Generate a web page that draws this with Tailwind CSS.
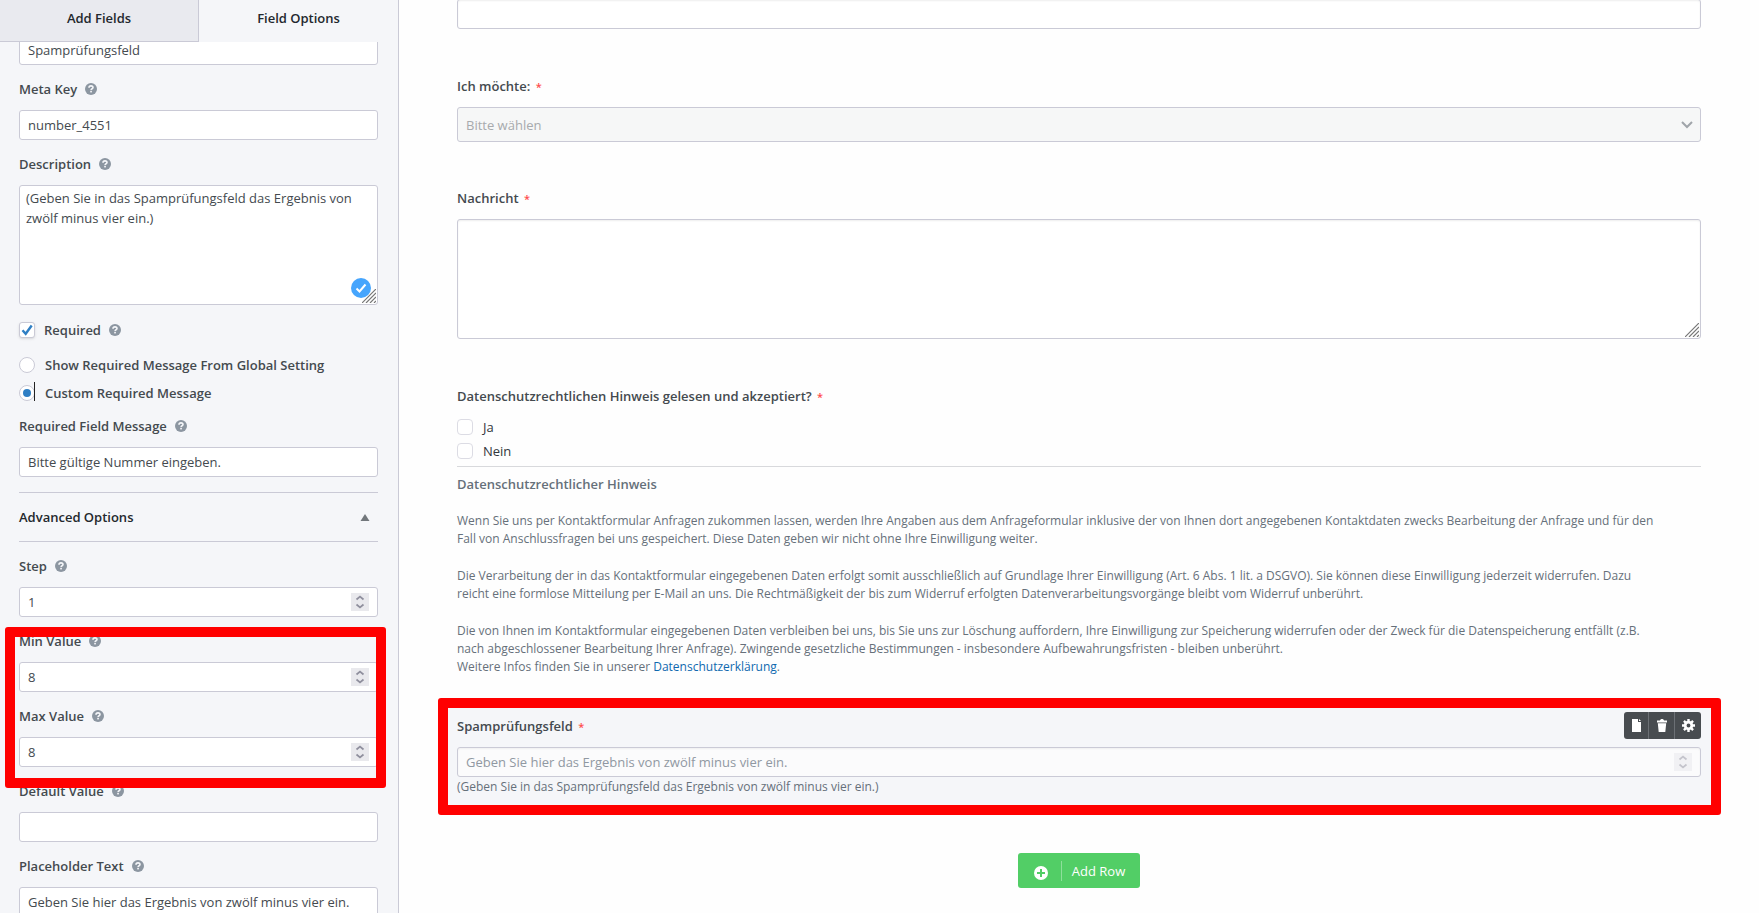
<!DOCTYPE html>
<html lang="de">
<head>
    <meta charset="UTF-8">
    <meta name="viewport" content="width=device-width, initial-scale=1.0">
    <title>Form Builder</title>
    <!-- Tailwind CSS CDN -->
    <script src="https://cdn.jsdelivr.net/npm/@tailwindcss/browser@4"></script>
</head>
<body class="h-screen overflow-hidden flex bg-[#fefefe] font-['Segoe_UI','Open_Sans',sans-serif] text-[13px] leading-5 text-[#444a4f]">

    <!-- Shared icons -->
    <svg class="hidden">
        <symbol id="help" viewBox="0 0 12 12">
            <circle cx="6" cy="6" r="6" fill="#8c96a1"/>
            <path d="M4 4.700C4 3.500 4.900 2.900 6 2.900s2 .7 2 1.700c0 1.300-1.900 1.100-1.900 2.500" fill="none" stroke="#f5f6f9" stroke-width="1.600"/>
            <rect x="5.200" y="7.800" width="1.700" height="1.600" fill="#f5f6f9"/>
        </symbol>
        <symbol id="spin" viewBox="0 0 18 18">
            <rect width="18" height="18" fill="#e9e9ed"/>
            <path d="M5.500 6.500L9 3.500l3.500 3M5.500 11.500l3.500 3 3.500-3" fill="none" stroke="#8f8f9d" stroke-width="1.700"/>
        </symbol>
        <symbol id="grip" viewBox="0 0 14 14">
            <path d="M0 14L14 0M4 14L14 4M8 14l6-6M12 14l2-2" fill="none" stroke="#777" stroke-width="1.200"/>
        </symbol>
    </svg>

    <!-- Sidebar -->
    <aside class="w-[399px] shrink-0 flex flex-col bg-[#f5f6f9] border-r border-[#cacad6]">
        <div class="grid grid-cols-2 shrink-0 h-[42px] text-[#23282d] font-[550]">
            <button class="bg-[#e9eaef] border-r border-b border-[#cacad6] pb-1.5">Add Fields</button>
            <button class="pb-1.5">Field Options</button>
        </div>

        <div class="flex-1 overflow-hidden pl-[19px] pr-5">
            <div class="-mt-[7px] flex flex-col gap-3.5">
                <input type="text" aria-label="Field Label" value="Spamprüfungsfeld" class="w-full h-[30px] px-2 bg-white border border-[#cacad6] rounded-[3px]">

                <div class="flex flex-col gap-[11px]">
                    <label for="metaKey" class="flex items-center gap-2 font-[550]">Meta Key <svg class="size-3"><use href="#help"/></svg></label>
                    <input type="text" id="metaKey" value="number_4551" class="w-full h-[30px] px-2 bg-white border border-[#cacad6] rounded-[3px]">
                </div>

                <div class="flex flex-col gap-[11px]">
                    <label for="description" class="flex items-center gap-2 font-[550]">Description <svg class="size-3"><use href="#help"/></svg></label>
                    <div class="relative h-[120px]">
                        <textarea id="description" class="block w-full h-full px-1.5 py-0.5 resize-none bg-white border border-[#cacad6] rounded-[3px] leading-5">(Geben Sie in das Spamprüfungsfeld das Ergebnis von zwölf minus vier ein.)</textarea>
                        <svg class="absolute right-[7px] bottom-[7px] size-5" viewBox="0 0 20 20">
                            <circle cx="10" cy="10" r="10" fill="#46a5fd"/>
                            <path d="M5.500 10.500l3 3 6-7" fill="none" stroke="#fff" stroke-width="2"/>
                        </svg>
                        <svg class="absolute right-0.5 bottom-0.5 size-3.5"><use href="#grip"/></svg>
                    </div>
                </div>

                <div class="pt-0.5 leading-[18px]">
                    <div class="flex items-center h-[18px] font-[550]">
                        <span class="relative size-4 mr-[9px]">
                            <input type="checkbox" id="required" checked class="block size-4 appearance-none bg-white border border-[#cacad6] rounded-[3px] shadow-sm">
                            <svg class="absolute inset-0 size-4 pointer-events-none" viewBox="0 0 16 16"><path d="M3.500 8.200l3.200 3.600 6-8.300" fill="none" stroke="#2f7fc4" stroke-width="2.400"/></svg>
                        </span>
                        <label for="required" class="mr-2">Required</label>
                        <svg class="size-3"><use href="#help"/></svg>
                    </div>
                    <label class="mt-[17px] flex items-center gap-2.5 font-[550]">
                        <input type="radio" name="message" class="size-4 appearance-none bg-white border border-[#cacad6] rounded-full">
                        Show Required Message From Global Setting
                    </label>
                    <label class="relative mt-2.5 flex items-center gap-2.5 font-[550]">
                        <span class="flex items-center justify-center relative">
                            <input type="radio" name="message" checked class="size-4 appearance-none bg-white border border-[#cacad6] rounded-full">
                            <span class="absolute size-2 rounded-full bg-[#2f7fc4]"></span>
                        </span>
                        Custom Required Message
                        <!-- text caret next to the radio -->
                        <span class="absolute left-[15px] bottom-px w-px h-[19px] bg-[#222]"></span>
                    </label>
                </div>

                <div class="flex flex-col gap-[11px]">
                    <label for="requiredMessage" class="flex items-center gap-2 font-[550]">Required Field Message <svg class="size-3"><use href="#help"/></svg></label>
                    <input type="text" id="requiredMessage" value="Bitte gültige Nummer eingeben." class="w-full h-[30px] px-2 bg-white border border-[#cacad6] rounded-[3px]">
                </div>

                <button class="mt-px flex items-center justify-between h-[50px] pr-2 border-y border-[#cacad6] text-[#23282d] font-semibold">
                    Advanced Options
                    <svg class="w-2.5 h-[7px]" viewBox="0 0 10 7"><path d="M5 0l4.500 7h-9z" fill="#72777c"/></svg>
                </button>

                <div class="flex flex-col gap-[11px]">
                    <label for="step" class="flex items-center gap-2 font-[550]">Step <svg class="size-3"><use href="#help"/></svg></label>
                    <div class="relative">
                        <input type="number" id="step" value="1" class="block w-full h-[30px] px-2 bg-white border border-[#cacad6] rounded-[3px] [appearance:textfield]">
                        <svg class="absolute right-[9px] top-1.5 size-[18px]"><use href="#spin"/></svg>
                    </div>
                </div>

                <!-- Min / Max, marked in red -->
                <div class="relative flex flex-col gap-3.5">
                    <div class="flex flex-col gap-[11px]">
                        <label for="minValue" class="flex items-center gap-2 font-[550]">Min Value <svg class="size-3"><use href="#help"/></svg></label>
                        <div class="relative">
                            <input type="number" id="minValue" value="8" class="block w-full h-[30px] px-2 bg-white border border-[#cacad6] rounded-[3px] [appearance:textfield]">
                            <svg class="absolute right-[9px] top-1.5 size-[18px]"><use href="#spin"/></svg>
                        </div>
                    </div>
                    <div class="flex flex-col gap-[11px]">
                        <label for="maxValue" class="flex items-center gap-2 font-[550]">Max Value <svg class="size-3"><use href="#help"/></svg></label>
                        <div class="relative">
                            <input type="number" id="maxValue" value="8" class="block w-full h-[30px] px-2 bg-white border border-[#cacad6] rounded-[3px] [appearance:textfield]">
                            <svg class="absolute right-[9px] top-1.5 size-[18px]"><use href="#spin"/></svg>
                        </div>
                    </div>
                    <div class="absolute z-10 -left-3.5 -right-2 -top-1 -bottom-[21px] border-[10px] border-[#ff0000] rounded-[3px] pointer-events-none"></div>
                </div>

                <div class="flex flex-col gap-[11px]">
                    <label for="defaultValue" class="flex items-center gap-2 font-[550]">Default Value <svg class="size-3"><use href="#help"/></svg></label>
                    <input type="text" id="defaultValue" class="w-full h-[30px] px-2 bg-white border border-[#cacad6] rounded-[3px]">
                </div>

                <div class="flex flex-col gap-[11px]">
                    <label for="placeholderText" class="flex items-center gap-2 font-[550]">Placeholder Text <svg class="size-3"><use href="#help"/></svg></label>
                    <input type="text" id="placeholderText" value="Geben Sie hier das Ergebnis von zwölf minus vier ein." class="w-full h-[30px] px-2 bg-white border border-[#cacad6] rounded-[3px]">
                </div>
            </div>
        </div>
    </aside>

    <!-- Form preview -->
    <main class="flex-1 min-w-0 px-[58px]">
        <input type="text" aria-label="Text" class="block -mt-px w-full h-[30px] px-2 bg-white border border-[#cacad6] rounded-[3px] shadow-[inset_0_1px_2px_rgba(0,0,0,0.07)]">

        <label for="choice" class="block mt-[47px] mb-[11px] font-[550]">Ich möchte: <span class="ml-0.5 text-[11px] leading-none text-[#ff4d4d]">*</span></label>
        <div class="relative">
            <select id="choice" disabled class="block w-full h-[35px] px-2 appearance-none bg-[#f6f7f7] border border-[#cacad6] rounded-[3px] text-[#a7aaad] opacity-100">
                <option>Bitte wählen</option>
            </select>
            <svg class="absolute right-2 top-3.5 w-3 h-2" viewBox="0 0 12 8"><path d="M1 1l5 5 5-5" fill="none" stroke="#a0a5aa" stroke-width="2"/></svg>
        </div>

        <label for="message" class="block mt-[46px] mb-[11px] font-[550]">Nachricht <span class="ml-0.5 text-[11px] leading-none text-[#ff4d4d]">*</span></label>
        <div class="relative h-[120px]">
            <textarea id="message" class="block w-full h-full resize-none bg-white border border-[#cacad6] rounded-[3px] shadow-[inset_0_1px_2px_rgba(0,0,0,0.07)]"></textarea>
            <svg class="absolute right-0.5 bottom-0.5 size-3.5"><use href="#grip"/></svg>
        </div>

        <fieldset class="mt-[47px]">
            <legend class="font-[550]">Datenschutzrechtlichen Hinweis gelesen und akzeptiert? <span class="ml-0.5 text-[11px] leading-none text-[#ff4d4d]">*</span></legend>
            <div class="mt-[11px] flex flex-col gap-1">
                <label class="flex items-center gap-2.5 text-[#32373c]"><input type="checkbox" class="size-4 appearance-none bg-white border border-[#dcdce4] rounded-[4px]">Ja</label>
                <label class="flex items-center gap-2.5 text-[#32373c]"><input type="checkbox" class="size-4 appearance-none bg-white border border-[#dcdce4] rounded-[4px]">Nein</label>
            </div>
        </fieldset>

        <div class="mt-[5px] pt-2 border-t border-[#d8d9dc] flex flex-col gap-[19px] text-[12px] leading-[18px] text-[#66707a]">
            <h2 class="text-[13px] leading-[18px] font-[550]">Datenschutzrechtlicher Hinweis</h2>
            <p>Wenn Sie uns per Kontaktformular Anfragen zukommen lassen, werden Ihre Angaben aus dem Anfrageformular inklusive der von Ihnen dort angegebenen Kontaktdaten zwecks Bearbeitung der Anfrage und für den<br>Fall von Anschlussfragen bei uns gespeichert. Diese Daten geben wir nicht ohne Ihre Einwilligung weiter.</p>
            <p>Die Verarbeitung der in das Kontaktformular eingegebenen Daten erfolgt somit ausschließlich auf Grundlage Ihrer Einwilligung (Art. 6 Abs. 1 lit. a DSGVO). Sie können diese Einwilligung jederzeit widerrufen. Dazu<br>reicht eine formlose Mitteilung per E-Mail an uns. Die Rechtmäßigkeit der bis zum Widerruf erfolgten Datenverarbeitungsvorgänge bleibt vom Widerruf unberührt.</p>
            <p>Die von Ihnen im Kontaktformular eingegebenen Daten verbleiben bei uns, bis Sie uns zur Löschung auffordern, Ihre Einwilligung zur Speicherung widerrufen oder der Zweck für die Datenspeicherung entfällt (z.B.<br>nach abgeschlossener Bearbeitung Ihrer Anfrage). Zwingende gesetzliche Bestimmungen - insbesondere Aufbewahrungsfristen - bleiben unberührt.<br>Weitere Infos finden Sie in unserer <a href="#" class="text-[#0f69af]">Datenschutzerklärung</a>.</p>
        </div>

        <!-- Selected field, marked in red -->
        <section class="-ml-[19px] -mr-5 mt-[22px] h-[117px] pl-[9px] pr-2.5 pt-1 border-[10px] border-[#ff0000] rounded-[3px] bg-[#f5f6f9]">
            <div class="flex items-start justify-between h-[27px]">
                <label for="spam" class="pt-1 font-[550]">Spamprüfungsfeld <span class="ml-0.5 text-[11px] leading-none text-[#ff4d4d]">*</span></label>
                <div class="flex h-[27px] rounded-[3px] bg-[#484c50] divide-x divide-[#6c7075]">
                    <button aria-label="Duplicate" class="w-[25px] flex items-center justify-center">
                        <svg class="w-[9px] h-[13px]" viewBox="0 0 9 13"><path d="M0 0h6v3h3v10H0z" fill="#fff"/><path d="M7 0l2 2H7z" fill="#fff"/></svg>
                    </button>
                    <button aria-label="Delete" class="w-[26px] flex items-center justify-center">
                        <svg class="w-2.5 h-[13px]" viewBox="0 0 10 13"><path d="M0 1.500h3C3.200.5 4 0 5 0s1.800.5 2 1.500h3V3.500H0zM.8 4.200h8.400L8.300 13H1.700z" fill="#fff"/></svg>
                    </button>
                    <button aria-label="Settings" class="w-[26px] flex items-center justify-center">
                        <svg class="size-[13px]" viewBox="0 0 14 14">
                            <circle cx="7" cy="7" r="3.600" fill="none" stroke="#fff" stroke-width="3"/>
                            <path d="M7 0v3M7 11v3M0 7h3M11 7h3M2.100 2.100l2 2M9.900 9.900l2 2M2.100 11.900l2-2M9.900 4.100l2-2" stroke="#fff" stroke-width="2.600"/>
                        </svg>
                    </button>
                </div>
            </div>
            <div class="relative mt-2">
                <input type="number" id="spam" placeholder="Geben Sie hier das Ergebnis von zwölf minus vier ein." class="block w-full h-[30px] px-2 bg-[#fbfbfc] border border-[#cacad6] rounded-[3px] placeholder:text-[#9098a2] [appearance:textfield] shadow-[inset_0_1px_2px_rgba(0,0,0,0.05)]">
                <svg class="absolute right-[9px] top-1.5 size-[18px] opacity-50"><use href="#spin"/></svg>
            </div>
            <p class="text-[12px] leading-5 text-[#66707a]">(Geben Sie in das Spamprüfungsfeld das Ergebnis von zwölf minus vier ein.)</p>
        </section>

        <button class="mt-[38px] mx-auto flex items-center h-[35px] pl-4 pr-[15px] rounded-[3px] bg-[#52ce66] text-white">
            <svg class="size-3.5 mt-1" viewBox="0 0 14 14"><circle cx="7" cy="7" r="7" fill="#fff"/><path d="M7 3v8M3 7h8" stroke="#52ce66" stroke-width="2"/></svg>
            <span class="ml-[13px] mr-2.5 w-px h-5 bg-white/35"></span>
            Add Row
        </button>
    </main>

</body>
</html>
